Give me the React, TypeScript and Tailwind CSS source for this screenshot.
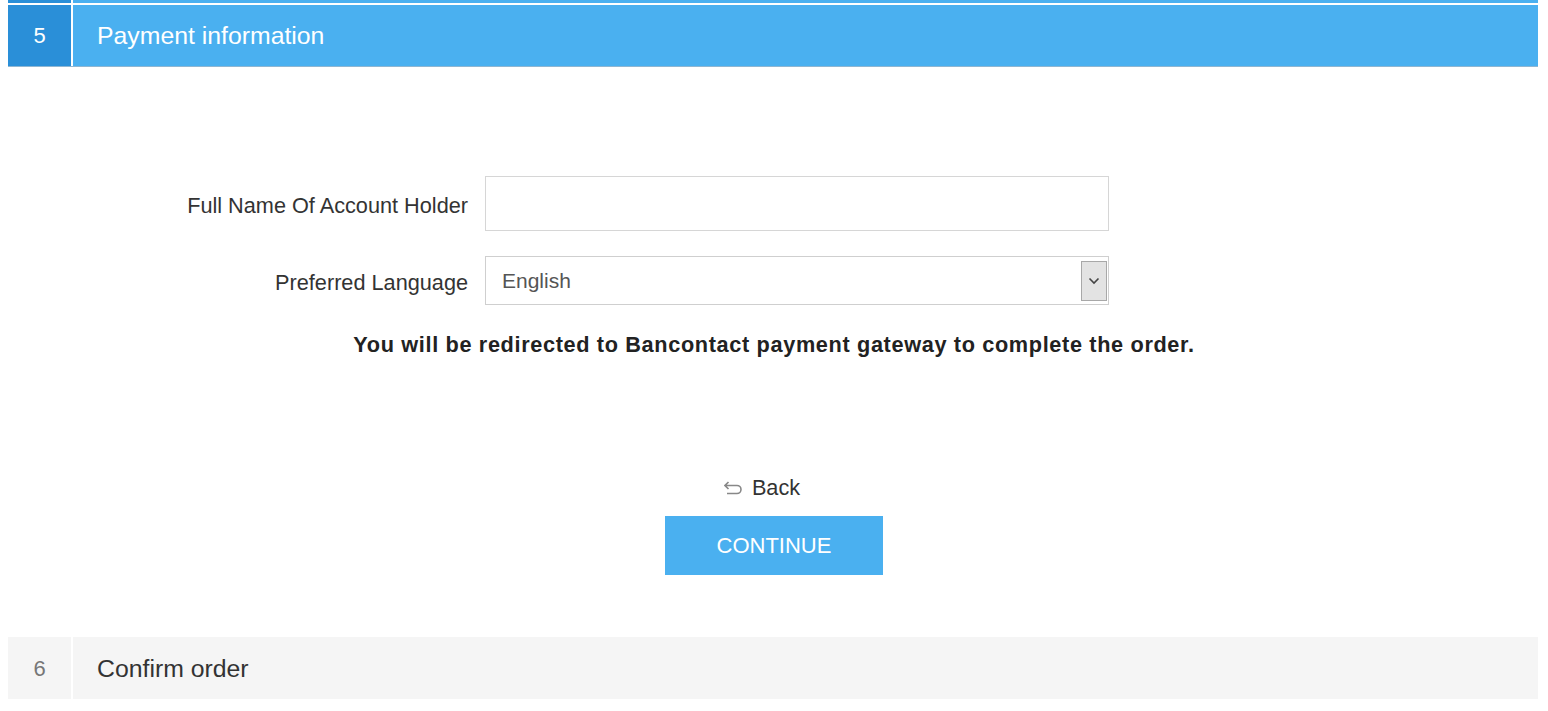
import { useState } from "react";

function StepBar({
    num,
    title,
    active,
}: {
    num: string;
    title: string;
    active?: boolean;
}) {
    return (
        <div
            className={
                active
                    ? "ml-2 mr-[10px] flex h-[62px] border-b border-[#8fb6d2] bg-[#4ab0f0]"
                    : "ml-2 mr-[10px] flex h-[62px] bg-[#f5f5f5]"
            }
        >
            <div
                className={
                    active
                        ? "flex w-[63px] items-center justify-center bg-[#2a8fd8] text-[22px] text-white"
                        : "flex w-[63px] items-center justify-center text-[22px] text-[#777]"
                }
            >
                {num}
            </div>
            <div className="w-[2px] bg-white" />
            <div
                className={
                    active
                        ? "flex items-center pl-[24px] text-[24.8px] text-white"
                        : "flex items-center pl-[24px] text-[24.8px] text-[#333]"
                }
            >
                {title}
            </div>
        </div>
    );
}

export default function App() {
    const [name, setName] = useState("");
    const [lang, setLang] = useState("English");

    return (
        <div className="h-[711px] w-[1548px] overflow-hidden bg-white font-['Liberation_Sans',Arial,sans-serif]">
            {/* previous step, cut off at the top */}
            <div className="ml-2 mr-[10px] flex h-[3px] bg-[#4ab0f0]">
                <div className="w-[63px] bg-[#2a8fd8]" />
                <div className="w-[2px] bg-white" />
            </div>
            <div className="h-[2px]" />

            <StepBar num="5" title="Payment information" active />

            {/* Form */}
            <div className="pt-[109px]">
                <div className="flex items-center">
                    <label className="w-[468px] pt-[6px] text-right text-[21.7px] text-[#333]">
                        Full Name Of Account Holder
                    </label>
                    <input
                        value={name}
                        onChange={(e) => setName(e.target.value)}
                        className="ml-[17px] h-[55px] w-[624px] border border-[#d6d6d6] px-4 text-[21px] outline-none"
                    />
                </div>
                <div className="mt-[25px] flex items-center">
                    <label className="w-[468px] pt-[6px] text-right text-[21.7px] text-[#333]">
                        Preferred Language
                    </label>
                    <div className="relative ml-[17px] h-[49px] w-[624px] border border-[#cfcfcf]">
                        <select
                            value={lang}
                            onChange={(e) => setLang(e.target.value)}
                            className="h-full w-full appearance-none bg-white pl-4 text-[21px] text-[#555] outline-none"
                        >
                            <option>English</option>
                            <option>Nederlands</option>
                            <option>Français</option>
                            <option>Deutsch</option>
                        </select>
                        <div className="pointer-events-none absolute right-[1px] top-[4px] flex h-[40px] w-[26px] items-center justify-center border border-[#a8a8a8] bg-[#e3e3e3]">
                            <svg width="12" height="8" viewBox="0 0 12 8">
                                <path
                                    d="M1.5 1.5 L6 6 L10.5 1.5"
                                    fill="none"
                                    stroke="#444"
                                    strokeWidth="1.6"
                                />
                            </svg>
                        </div>
                    </div>
                </div>
                <p className="mt-[24px] text-center text-[21.7px] font-bold tracking-[0.65px] text-[#222]">
                    You will be redirected to Bancontact payment gateway to complete the order.
                </p>
            </div>

            {/* Actions */}
            <div className="mt-[110px] flex flex-col items-center">
                <button className="mr-[24px] flex items-center gap-[10px] text-[21.7px] text-[#333]">
                    <svg width="18" height="14" viewBox="0 0 18 14">
                        <path
                            d="M4.5 1 L1 4.5 L4.5 8 M1 4.5 H13 A4 4 0 0 1 13 12.5 H3"
                            fill="none"
                            stroke="#888"
                            strokeWidth="1.6"
                        />
                    </svg>
                    Back
                </button>
                <button className="mt-[12px] h-[59px] w-[218px] bg-[#4ab0f0] text-[22px] text-white">
                    CONTINUE
                </button>
            </div>

            <div className="mt-[62px]">
                <StepBar num="6" title="Confirm order" />
            </div>
        </div>
    );
}
